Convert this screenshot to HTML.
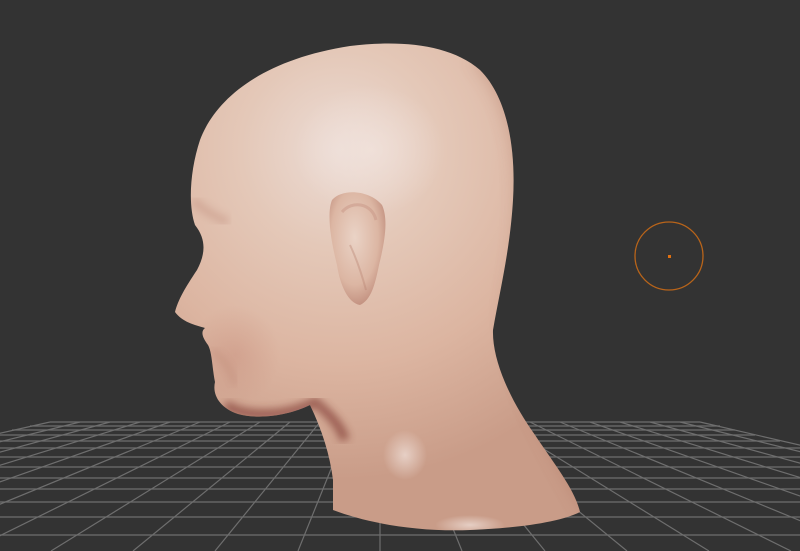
<!DOCTYPE html>
<html><head><style>
html,body{margin:0;padding:0;background:#333333;}
svg{display:block}
</style></head><body>
<svg width="800" height="551" viewBox="0 0 800 551" xmlns="http://www.w3.org/2000/svg">
<defs>
<path id="sil" d="M350 46 C400 40 450 44 480 70 C508 98 516 150 513 200 C510 250 500 290 493 330 C492 360 510 400 535 435 C555 465 575 490 580 512 C560 522 520 528 470 530 C420 532 370 524 333 510 L333 480 C330 455 322 430 310 405 C290 415 260 420 238 414 C220 408 212 395 215 382 C212 366 212 352 208 345 C203 338 200 332 205 328 C195 325 182 322 175 312 C178 300 185 288 197 270 C205 255 207 240 195 225 C188 205 190 170 200 140 C215 100 260 60 350 46 Z"/>
<clipPath id="clip"><use href="#sil"/></clipPath>
<radialGradient id="skin" cx="340" cy="150" r="330" gradientUnits="userSpaceOnUse">
<stop offset="0" stop-color="#ecdcd5"/>
<stop offset="0.3" stop-color="#e4c8b8"/>
<stop offset="0.65" stop-color="#dcb5a1"/>
<stop offset="1" stop-color="#c99c88"/>
</radialGradient>
<radialGradient id="dark" cx="0.5" cy="0.5" r="0.5">
<stop offset="0" stop-color="#a86050" stop-opacity="0.35"/>
<stop offset="1" stop-color="#a86050" stop-opacity="0"/>
</radialGradient>
<radialGradient id="jaw" cx="0.5" cy="0.5" r="0.5">
<stop offset="0" stop-color="#6a2420" stop-opacity="0.85"/>
<stop offset="1" stop-color="#6a2420" stop-opacity="0"/>
</radialGradient>
<radialGradient id="face" cx="0.5" cy="0.5" r="0.5">
<stop offset="0" stop-color="#c07f6e" stop-opacity="0.3"/>
<stop offset="1" stop-color="#c07f6e" stop-opacity="0"/>
</radialGradient>
<radialGradient id="ear" cx="0.45" cy="0.4" r="0.6">
<stop offset="0" stop-color="#ead3c6"/>
<stop offset="0.7" stop-color="#dcb6a3"/>
<stop offset="1" stop-color="#c49382"/>
</radialGradient>
<radialGradient id="hl" cx="0.5" cy="0.5" r="0.5">
<stop offset="0" stop-color="#f2e4de" stop-opacity="0.7"/>
<stop offset="1" stop-color="#f2e4de" stop-opacity="0"/>
</radialGradient>
<filter id="blur"><feGaussianBlur stdDeviation="8"/></filter>
<filter id="blur2"><feGaussianBlur stdDeviation="4"/></filter>
</defs>
<g stroke="#6e6e6e" stroke-width="1.2" fill="none">
<line x1="50" y1="422" x2="700" y2="422"/>
<line x1="30" y1="426" x2="720" y2="426"/>
<line x1="12" y1="430" x2="735" y2="430"/>
<line x1="0" y1="435" x2="755" y2="435"/>
<line x1="0" y1="441" x2="780" y2="441"/>
<line x1="0" y1="448" x2="800" y2="448"/>
<line x1="0" y1="457" x2="800" y2="457"/>
<line x1="0" y1="467" x2="800" y2="467"/>
<line x1="0" y1="478" x2="800" y2="478"/>
<line x1="0" y1="489" x2="800" y2="489"/>
<line x1="0" y1="502" x2="800" y2="502"/>
<line x1="0" y1="517" x2="800" y2="517"/>
<line x1="0" y1="535" x2="800" y2="535"/>
<line x1="50" y1="422" x2="-525" y2="551"/>
<line x1="80" y1="422" x2="-443" y2="551"/>
<line x1="110" y1="422" x2="-361" y2="551"/>
<line x1="140" y1="422" x2="-278" y2="551"/>
<line x1="170" y1="422" x2="-196" y2="551"/>
<line x1="200" y1="422" x2="-114" y2="551"/>
<line x1="230" y1="422" x2="-31" y2="551"/>
<line x1="260" y1="422" x2="51" y2="551"/>
<line x1="290" y1="422" x2="133" y2="551"/>
<line x1="320" y1="422" x2="215" y2="551"/>
<line x1="350" y1="422" x2="298" y2="551"/>
<line x1="380" y1="422" x2="380" y2="551"/>
<line x1="410" y1="422" x2="462" y2="551"/>
<line x1="440" y1="422" x2="545" y2="551"/>
<line x1="470" y1="422" x2="627" y2="551"/>
<line x1="500" y1="422" x2="709" y2="551"/>
<line x1="530" y1="422" x2="791" y2="551"/>
<line x1="560" y1="422" x2="874" y2="551"/>
<line x1="590" y1="422" x2="956" y2="551"/>
<line x1="620" y1="422" x2="1038" y2="551"/>
<line x1="650" y1="422" x2="1120" y2="551"/>
<line x1="680" y1="422" x2="1203" y2="551"/>
<line x1="700" y1="422" x2="1258" y2="551"/>
</g>
<use href="#sil" fill="url(#skin)"/>
<g clip-path="url(#clip)">
<path d="M470 60 C520 110 525 200 505 300 C500 360 530 420 585 515 L620 515 L620 40 Z" fill="#a86a58" opacity="0.3" filter="url(#blur)"/>
<ellipse cx="235" cy="355" rx="45" ry="50" fill="url(#face)"/>
<path d="M225 405 C250 420 290 415 315 402 C330 415 340 425 345 440" stroke="#7a322a" stroke-width="10" fill="none" opacity="0.6" filter="url(#blur2)"/>
<ellipse cx="370" cy="150" rx="75" ry="65" fill="url(#hl)"/>
<ellipse cx="405" cy="455" rx="22" ry="25" fill="url(#hl)"/>
<ellipse cx="470" cy="525" rx="35" ry="10" fill="url(#hl)"/>
<path d="M193 200 C205 212 218 218 228 222" stroke="#b88070" stroke-width="8" fill="none" opacity="0.35" filter="url(#blur2)"/>
<path d="M212 350 C225 360 232 372 235 385" stroke="#a86a5a" stroke-width="4" fill="none" opacity="0.3" filter="url(#blur2)"/>
</g>
<!-- ear -->
<path d="M332 200 C342 188 370 190 382 205 C389 220 384 245 379 265 C375 285 371 300 360 305 C348 303 340 285 337 265 C332 245 326 215 332 200 Z" fill="url(#ear)"/>
<path d="M342 212 C352 200 372 203 376 220" stroke="#c79686" stroke-width="3" fill="none" opacity="0.5"/>
<path d="M350 245 C358 262 362 275 366 290" stroke="#b98474" stroke-width="2" fill="none" opacity="0.4"/>
<circle cx="669" cy="256" r="34" fill="none" stroke="#b8641a" stroke-width="1.3"/>
<rect x="668" y="255" width="3" height="3" fill="#e07010"/>
</svg>
</body></html>
